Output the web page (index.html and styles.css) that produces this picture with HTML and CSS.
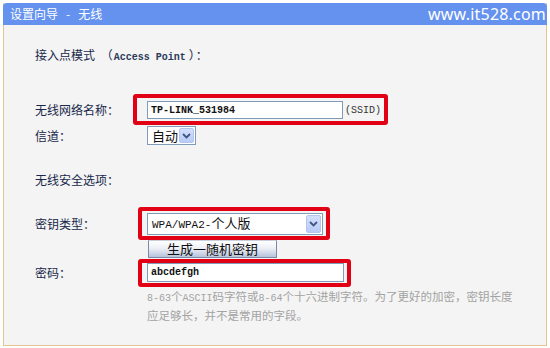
FILE: index.html
```html
<!DOCTYPE html>
<html lang="zh-CN">
<head>
<meta charset="utf-8">
<title>设置向导 - 无线</title>
<link rel="stylesheet" href="styles.css">
</head>
<body>
<div class="panel">
  <div class="head">
    <span class="head-title">设置向导<span class="dash">-</span>无线</span>
    <span class="site">www.it528.com</span>
  </div>
  <div class="form">
    <div class="title">接入点模式 <span class="paren">（</span><span class="lat">Access Point</span><span class="paren">）</span>：</div>

    <div class="row r-ssid">
      <div class="label">无线网络名称：</div>
      <div class="field">
        <div class="input w-ssid lat b">TP-LINK_531984</div>
        <span class="suffix lat">(SSID)</span>
        <div class="hl hl-ssid"></div>
      </div>
    </div>

    <div class="row r-chan">
      <div class="label">信道：</div>
      <div class="field">
        <div class="select w-chan"><span class="sel-text">自动</span><span class="arrow"><svg width="9" height="6" viewBox="0 0 9 6"><polyline points="1,1 4.5,4.5 8,1" fill="none" stroke="#3f5683" stroke-width="1.8"/></svg></span></div>
      </div>
    </div>

    <div class="row r-sec">
      <div class="label">无线安全选项：</div>
    </div>

    <div class="row r-type">
      <div class="label">密钥类型：</div>
      <div class="field">
        <div class="select w-type"><span class="sel-text"><span class="lat11">WPA/WPA2-</span>个人版</span><span class="arrow"><svg width="9" height="6" viewBox="0 0 9 6"><polyline points="1,1 4.5,4.5 8,1" fill="none" stroke="#3f5683" stroke-width="1.8"/></svg></span></div>
        <div class="hl hl-type"></div>
      </div>
    </div>

    <div class="row r-btn">
      <div class="btn">生成一随机密钥</div>
    </div>

    <div class="row r-key">
      <div class="label">密码：</div>
      <div class="field">
        <div class="input w-key lat b">abcdefgh</div>
        <div class="hl hl-key"></div>
      </div>
    </div>

    <div class="hint">
      <div><span class="hl-lat">8-63</span>个<span class="hl-lat">ASCII</span>码字符或<span class="hl-lat">8-64</span>个十六进制字符。为了更好的加密，密钥长度</div>
      <div>应足够长，并不是常用的字段。</div>
    </div>
  </div>
</div>
</body>
</html>
```

FILE: styles.css
```css
* { box-sizing: border-box; }
html, body { margin: 0; padding: 0; }
body {
  background: #ffffff;
  width: 550px;
  height: 348px;
  overflow: hidden;
  font-family: "Noto Sans CJK SC", sans-serif;
  font-size: 12px;
  color: #18284a;
}
.panel {
  margin: 3px 0 0 3px;
  width: 544px;
  height: 343px;
  background: #f4f4f4;
  border: 1px solid #e6c590;
  border-top: none;
}
.head {
  height: 22px;
  margin: 0 -1px;
  background: #6592ee;
  border-radius: 4px 4px 0 0;
  display: flex;
  align-items: center;
  justify-content: space-between;
  padding: 0 1px 0 7px;
  color: #ffffff;
}
.head-title { font-size: 12px; line-height: 22px; }
.dash { margin: 0 8px; }
.site {
  font-family: "Noto Sans", sans-serif;
  font-size: 16px;
  line-height: 22px;
  letter-spacing: 0.2px;
}
.form { padding-left: 31px; }
.lat {
  font-family: "Liberation Mono", monospace;
  font-size: 10px;
}
.b { font-weight: bold; }
.lat11 {
  font-family: "Liberation Mono", monospace;
  font-size: 11px;
}
.paren { margin: 0 1px 0 3px; }
.title { margin-top: 22px; line-height: 16px; font-size: 12px; }
.title .lat { font-weight: bold; color: #2a3a5a; }
.row { display: flex; align-items: center; }
.label { width: 112px; line-height: 16px; }
.field { position: relative; display: flex; align-items: center; }
.r-ssid { margin-top: 35px; height: 18px; }
.r-chan { margin-top: 7px; height: 19px; }
.r-sec { margin-top: 27px; height: 16px; }
.r-type { margin-top: 25px; height: 22px; }
.r-btn { margin-top: 5px; height: 18px; }
.r-key { margin-top: 5px; height: 19px; }

.input {
  background: #ffffff;
  border: 1px solid #7f9db9;
  padding-left: 3px;
  display: flex;
  align-items: center;
  color: #111;
}
.w-ssid { width: 196px; height: 18px; }
.w-key { width: 197px; height: 19px; }
.suffix { margin-left: 2px; color: #333; }

.select {
  background: #ffffff;
  border: 1px solid #7f9db9;
  display: flex;
  align-items: center;
  justify-content: space-between;
  padding: 1px 1px 1px 4px;
  color: #111;
}
.sel-text { font-size: 13px; line-height: 16px; }
.w-chan { width: 49px; height: 19px; }
.w-type { width: 176px; height: 22px; }
.arrow {
  width: 15px;
  align-self: stretch;
  background: linear-gradient(#d3e0fd, #b8cbf6);
  border: 1px solid #b3c6ee;
  border-radius: 2px;
  display: flex;
  align-items: center;
  justify-content: center;
}

.btn {
  margin-left: 113px;
  width: 129px;
  height: 18px;
  border: 1px solid #7c8aa6;
  border-top-color: #c9d0dc;
  background: linear-gradient(#ffffff 0%, #eef0f6 45%, #b6c2dc 100%);
  font-size: 13px;
  line-height: 16px;
  text-align: center;
  color: #111;
}

.hint {
  margin-top: 6px;
  margin-left: 112px;
  color: #a3a3a3;
  font-size: 11.5px;
  line-height: 16px;
  white-space: nowrap;
}
.hl-lat {
  font-family: "Liberation Mono", monospace;
  font-size: 10px;
}

.hl {
  position: absolute;
  border: 4px solid #e10014;
  border-radius: 3px;
  pointer-events: none;
}
.hl-ssid { left: -14px; top: -7px; width: 255px; height: 31px; }
.hl-type { left: -9px; top: -6px; width: 192px; height: 33px; }
.hl-key { left: -9px; top: -4px; width: 213px; height: 28px; }
```
